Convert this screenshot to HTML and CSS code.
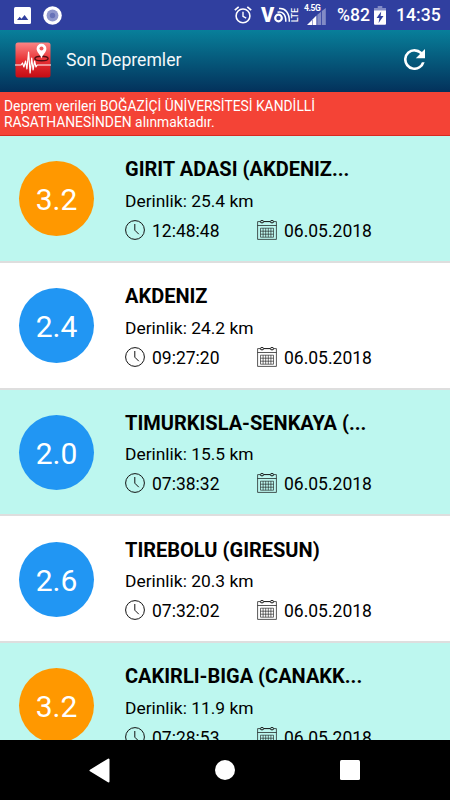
FILE: index.html
```html
<!DOCTYPE html>
<html lang="tr">
<head>
<meta charset="UTF-8">
<meta name="viewport" content="width=device-width, initial-scale=1.0">
<title>Son Depremler</title>
<link rel="stylesheet" href="styles.css">
</head>
<body>

<svg class="sprite" xmlns="http://www.w3.org/2000/svg">
  <symbol id="clock" viewBox="0 0 20 20">
    <circle cx="10" cy="10" r="9.4"/>
    <path d="M9.800 4v6.200l4 4"/>
  </symbol>
  <symbol id="calendar" viewBox="0 0 20 20">
    <path class="soft" d="M3.200 1.600H.6v17.800h18.800V1.600h-2.600M.6 5.500h18.800"/>
    <path d="M7 1.600h6"/>
    <ellipse cx="5" cy="1.700" rx="1.700" ry="1.200"/>
    <ellipse cx="15" cy="1.700" rx="1.700" ry="1.200"/>
    <path class="thin" d="M3.500 8.200h13v9h-13zM3.500 11.200h13M3.500 14.200h13M6.100 8.200v9M8.700 8.200v9M11.300 8.200v9M13.900 8.200v9"/>
  </symbol>
</svg>

<div class="status-bar">
  <svg class="picture" width="17" height="17" viewBox="0 0 17 17">
    <rect width="17" height="17" rx="1.5" fill="#fff"/>
    <path d="M3 13l2.700-3.200 1.800 2L10.600 8l3.700 5z" fill="#303f9f"/>
  </svg>
  <svg class="record" width="19" height="19" viewBox="0 0 19 19">
    <circle cx="9.500" cy="9.500" r="9.300" fill="#fff"/>
    <circle cx="9.500" cy="9.500" r="5.900" fill="#8f97cc"/>
    <circle cx="9.500" cy="9.500" r="2.700" fill="#6772b8"/>
  </svg>
  <svg class="alarm" width="18" height="18" viewBox="0 0 18 18" fill="none" stroke="#fff">
    <circle cx="9" cy="9.900" r="6.900" stroke-width="1.600"/>
    <path d="M9 5.800v4.500l3.200 1.900" stroke-width="1.400"/>
    <path d="M.8 4.200L4.700.9M17.200 4.200L13.300.9" stroke-width="1.700"/>
  </svg>
  <div class="volte">
    <span class="v">V</span>
    <svg width="17" height="16" viewBox="0 0 17 16" fill="none" stroke="#fff">
      <circle cx="4.500" cy="11" r="3.300" stroke-width="2.200"/>
      <path d="M3.500 5.200C8 4 12 7 11.800 14.700" stroke-width="1.500"/>
      <path d="M5 1.600c6-.8 10.600 4 10.300 13.100" stroke-width="1.500"/>
    </svg>
    <span class="lte">LTE</span>
  </div>
  <div class="signal">
    <span class="gen">4.5G</span>
    <svg width="19" height="17" viewBox="0 0 19 17">
      <path d="M0 17L5 12v5z" fill="#fff"/>
      <path d="M5.500 11.500L9.400 7.600V17H5.500z" fill="#fff"/>
      <path d="M10.300 6.700l3.700-3V17h-3.700zM14.800 3L18.800 0v17h-4z" fill="#828bc6"/>
    </svg>
  </div>
  <span class="percent">%82</span>
  <svg class="battery" width="12" height="19" viewBox="0 0 12 19">
    <path d="M3.700 0h4.600v2H12v3H0V2h3.700z" fill="#828bc6"/>
    <path d="M0 4.400h12v13.400a1 1 0 0 1-1 1H1a1 1 0 0 1-1-1z" fill="#fff"/>
    <path d="M7.200 5.400L2.600 12h2.800l-.8 4.900L9.500 10H6.600z" fill="#303f9f"/>
  </svg>
  <span class="time">14:35</span>
</div>

<div class="app-bar">
  <svg class="logo" width="36" height="36" viewBox="0 0 36 36">
    <defs>
      <linearGradient id="red" x1="0" y1="0" x2="0" y2="1">
        <stop offset="0" stop-color="#fb8585"/>
        <stop offset=".5" stop-color="#e83236"/>
        <stop offset="1" stop-color="#c40c14"/>
      </linearGradient>
    </defs>
    <rect x=".5" y=".5" width="35" height="35" rx="2.500" fill="url(#red)"/>
    <ellipse cx="26.500" cy="16.500" rx="6.600" ry="2.300" fill="none" stroke="#501014" stroke-width="1.400"/>
    <path d="M26.500 16.500c-1-4-4.900-6-4.900-9.800a4.900 4.900 0 0 1 9.800 0c0 3.800-3.900 5.800-4.900 9.800z" fill="#fff"/>
    <circle cx="26.500" cy="6.600" r="2" fill="#ee5558"/>
    <path d="M0 23h6l1.500-2 1.400 4 1.700-6 1.300 8 1.700-17 1.500 21 1.600-15 1.400 12 1.500-9 1.400 6 1.200-2H36" fill="none" stroke="#fff" stroke-width="1.200" stroke-linejoin="round"/>
  </svg>
  <h1>Son Depremler</h1>
  <svg class="refresh" width="21" height="21" viewBox="4 4 16 16" fill="#fff">
    <path d="M17.650 6.350A7.960 7.960 0 0 0 12 4a8 8 0 1 0 7.730 10h-2.080A6 6 0 1 1 12 6c1.660 0 3.140.69 4.220 1.780L13 11h7V4z"/>
  </svg>
</div>

<div class="notice">Deprem verileri BOĞAZİÇİ ÜNİVERSİTESİ KANDİLLİ<br>RASATHANESİNDEN alınmaktadır.</div>

<div class="list">
  <div class="quake tinted">
    <div class="magnitude orange">3.2</div>
    <div class="info">
      <h2>GIRIT ADASI (AKDENIZ...</h2>
      <p>Derinlik: 25.4 km</p>
      <div class="when">
        <svg><use href="#clock"/></svg><span class="hour">12:48:48</span>
        <svg><use href="#calendar"/></svg><span>06.05.2018</span>
      </div>
    </div>
  </div>
  <div class="quake">
    <div class="magnitude blue">2.4</div>
    <div class="info">
      <h2>AKDENIZ</h2>
      <p>Derinlik: 24.2 km</p>
      <div class="when">
        <svg><use href="#clock"/></svg><span class="hour">09:27:20</span>
        <svg><use href="#calendar"/></svg><span>06.05.2018</span>
      </div>
    </div>
  </div>
  <div class="quake tinted">
    <div class="magnitude blue">2.0</div>
    <div class="info">
      <h2>TIMURKISLA-SENKAYA (...</h2>
      <p>Derinlik: 15.5 km</p>
      <div class="when">
        <svg><use href="#clock"/></svg><span class="hour">07:38:32</span>
        <svg><use href="#calendar"/></svg><span>06.05.2018</span>
      </div>
    </div>
  </div>
  <div class="quake">
    <div class="magnitude blue">2.6</div>
    <div class="info">
      <h2>TIREBOLU (GIRESUN)</h2>
      <p>Derinlik: 20.3 km</p>
      <div class="when">
        <svg><use href="#clock"/></svg><span class="hour">07:32:02</span>
        <svg><use href="#calendar"/></svg><span>06.05.2018</span>
      </div>
    </div>
  </div>
  <div class="quake tinted">
    <div class="magnitude orange">3.2</div>
    <div class="info">
      <h2>CAKIRLI-BIGA (CANAKK...</h2>
      <p>Derinlik: 11.9 km</p>
      <div class="when">
        <svg><use href="#clock"/></svg><span class="hour">07:28:53</span>
        <svg><use href="#calendar"/></svg><span>06.05.2018</span>
      </div>
    </div>
  </div>
</div>

<div class="nav-bar">
  <svg width="21" height="25" viewBox="0 0 21 25"><path d="M1.500 12.500L19.500 1.500V23.500z" fill="#fff" stroke="#fff" stroke-width="2" stroke-linejoin="round"/></svg>
  <svg width="20" height="20" viewBox="0 0 20 20"><circle cx="10" cy="10" r="10" fill="#fff"/></svg>
  <svg width="20" height="20" viewBox="0 0 20 20"><rect width="20" height="20" rx="1.500" fill="#fff"/></svg>
</div>

</body>
</html>
```
FILE: styles.css
```css
* {
  box-sizing: border-box;
}
body {
  margin: 0;
  height: 800px;
  display: flex;
  flex-direction: column;
  overflow: hidden;
  background: #fff;
  font-family: Roboto, sans-serif;
  color: #000;
}
h1, h2, p {
  margin: 0;
}
svg {
  display: block;
  flex: none;
}
.sprite {
  position: absolute;
  width: 0;
  height: 0;
}
.status-bar {
  flex: none;
  height: 30px;
  display: flex;
  align-items: center;
  padding: 0 10px 0 14px;
  background: #303f9f;
  color: #fff;
  white-space: nowrap;
}
.record {
  margin-left: 12px;
}
.alarm {
  margin-left: auto;
}
.volte {
  display: flex;
  align-items: center;
  width: 38px;
  margin-left: 9px;
}
.volte .v {
  width: 13px;
  font-size: 20px;
  font-weight: 900;
}
.volte .lte {
  writing-mode: vertical-rl;
  transform: rotate(180deg);
  width: 8px;
  font-size: 9px;
  line-height: 8px;
  font-weight: 500;
}
.signal {
  position: relative;
  width: 24px;
  height: 19px;
  margin-left: 5px;
}
.signal svg {
  margin: 2px 0 0 3px;
}
.signal .gen {
  position: absolute;
  left: 0;
  top: -2px;
  font-size: 8.5px;
  line-height: 9px;
  font-weight: 700;
  letter-spacing: -0.4px;
}
.percent, .time {
  font-size: 17.6px;
  font-weight: 500;
}
.percent {
  width: 33px;
  margin-left: 9px;
}
.battery {
  margin-left: 4px;
}
.time {
  width: 44px;
  margin-left: 10px;
}
.app-bar {
  flex: none;
  height: 62px;
  display: flex;
  align-items: center;
  padding: 0 25px 3px 15px;
  background: linear-gradient(#087f9a, #03315b);
}
.app-bar h1 {
  margin-left: 15px;
  padding-top: 1px;
  font-size: 17.6px;
  font-weight: 400;
  color: #f4f8fa;
}
.refresh {
  margin-left: auto;
}
.notice {
  flex: none;
  height: 44px;
  padding: 6px 4px 0;
  background: #f44336;
  border-bottom: 1px solid #d8291f;
  color: #fff;
  font-size: 13.85px;
  line-height: 16px;
}
.list {
  flex: 1;
  min-height: 0;
  overflow: hidden;
}
.quake {
  height: 126.75px;
  display: flex;
  padding: 25.4px 0 0 19px;
  border-bottom: 2px solid #dedede;
}
.tinted {
  background: #bdf7ef;
}
.magnitude {
  flex: none;
  width: 75px;
  height: 75px;
  border-radius: 50%;
  color: #fff;
  font-size: 30px;
  line-height: 77px;
  text-align: center;
}
.orange {
  background: #ff9800;
}
.blue {
  background: #2196f3;
}
.info {
  margin-left: 31px;
  font-size: 17.5px;
}
.info h2 {
  margin-top: -4px;
  font-size: 20px;
  line-height: 24px;
  font-weight: 700;
  white-space: nowrap;
}
.info p {
  margin-top: 7.600px;
  font-size: 17.4px;
  line-height: 24px;
}
.when {
  display: flex;
  align-items: center;
  margin-top: 6px;
  line-height: 24px;
}
.when svg {
  width: 20px;
  height: 20px;
  margin: -2px 7px 0 0;
  fill: none;
  stroke: #111;
  stroke-width: 1;
}
.soft {
  stroke-opacity: .7;
}
.thin {
  stroke-width: .6;
}
.hour {
  width: 105px;
}
.nav-bar {
  flex: none;
  height: 60px;
  display: flex;
  align-items: center;
  justify-content: center;
  gap: 105px;
  padding-right: 1px;
  background: #000;
}
```
